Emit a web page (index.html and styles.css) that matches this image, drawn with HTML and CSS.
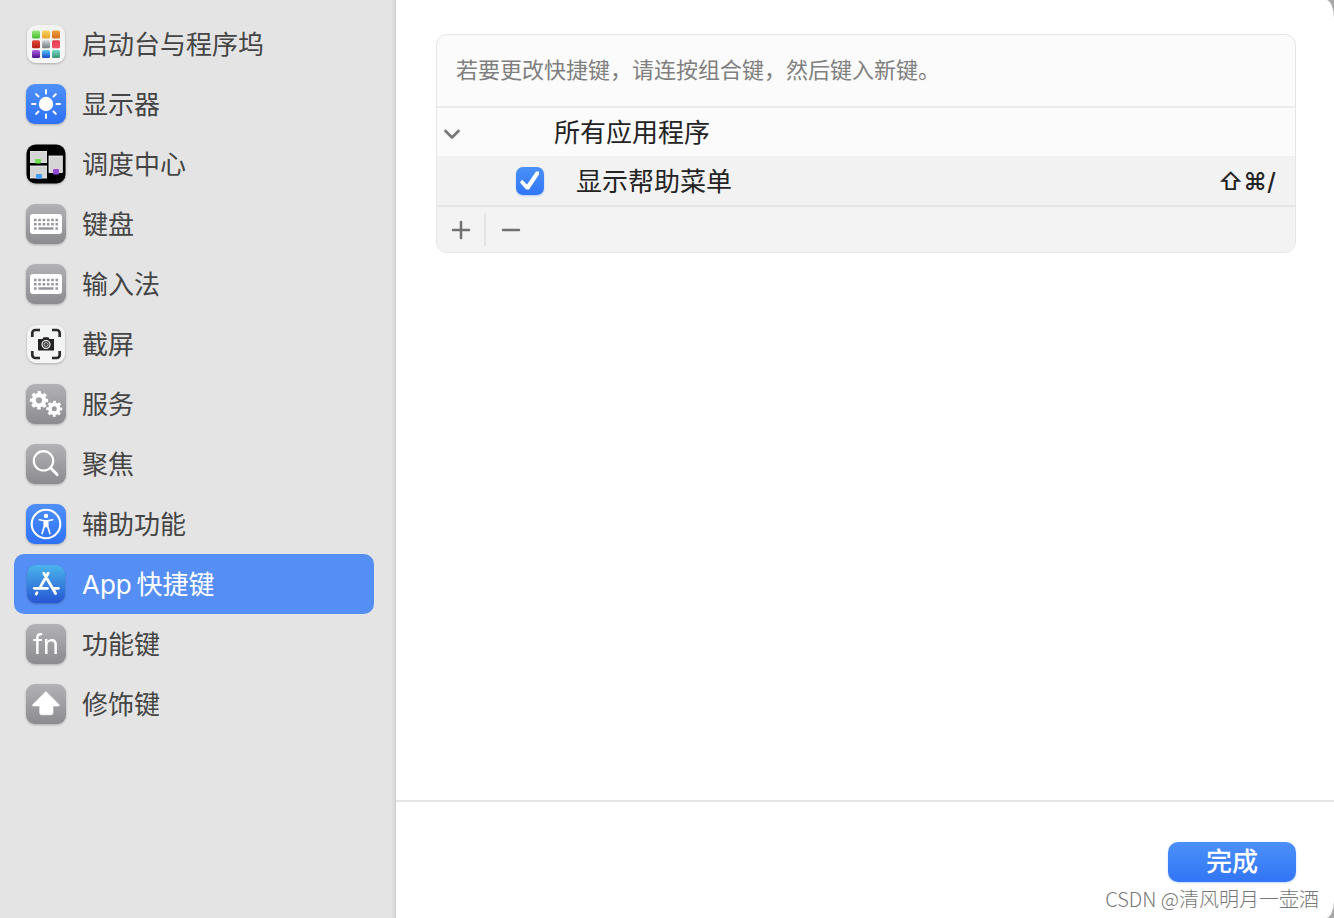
FILE: index.html
```html
<!DOCTYPE html>
<html lang="zh-CN">
<head>
<meta charset="utf-8">
<meta name="viewport" content="width=device-width, initial-scale=1">
<title>键盘快捷键</title>
<link rel="stylesheet" href="styles.css">
</head>
<body>
<svg class="defs" width="0" height="0" aria-hidden="true">
  <defs>
    <linearGradient id="gray" x2="0" y2="1"><stop offset="0" stop-color="#b2b1b6"/><stop offset="1" stop-color="#8c8b90"/></linearGradient>
    <linearGradient id="blue" x2="0" y2="1"><stop offset="0" stop-color="#4e90f8"/><stop offset="1" stop-color="#2e71f5"/></linearGradient>
    <linearGradient id="white" x2="0" y2="1"><stop offset="0" stop-color="#f1f2f2"/><stop offset="1" stop-color="#f6f6f6"/></linearGradient>
    <linearGradient id="store" x2="0" y2="1"><stop offset="0" stop-color="#4ab4ec"/><stop offset="1" stop-color="#2655d3"/></linearGradient>
    <linearGradient id="g1" x2="0" y2="1"><stop offset="0" stop-color="#9be87c"/><stop offset="1" stop-color="#43bd2e"/></linearGradient>
    <linearGradient id="g2" x2="0" y2="1"><stop offset="0" stop-color="#f7d65e"/><stop offset="1" stop-color="#eba22c"/></linearGradient>
    <linearGradient id="g3" x2="0" y2="1"><stop offset="0" stop-color="#efa03c"/><stop offset="1" stop-color="#d96d1d"/></linearGradient>
    <linearGradient id="g4" x2="0" y2="1"><stop offset="0" stop-color="#e34a3c"/><stop offset="1" stop-color="#b51d16"/></linearGradient>
    <linearGradient id="g5" x2="0" y2="1"><stop offset="0" stop-color="#cfd4d6"/><stop offset="1" stop-color="#767c80"/></linearGradient>
    <linearGradient id="g6" x2="0" y2="1"><stop offset="0" stop-color="#e83a50"/><stop offset="1" stop-color="#f05468"/></linearGradient>
    <linearGradient id="g7" x2="0" y2="1"><stop offset="0" stop-color="#b45fe0"/><stop offset="1" stop-color="#4a1190"/></linearGradient>
    <linearGradient id="g8" x2="0" y2="1"><stop offset="0" stop-color="#5cc8f8"/><stop offset="1" stop-color="#1448c8"/></linearGradient>
    <linearGradient id="g9" x2="0" y2="1"><stop offset="0" stop-color="#74dcc8"/><stop offset="1" stop-color="#3c9070"/></linearGradient>
    <g id="keyboard">
      <rect width="40" height="40" rx="9" fill="url(#gray)"/>
      <rect x="4" y="10" width="32" height="20" rx="3" fill="#fff"/>
      <g stroke="#98979c" stroke-width="2.400">
        <path d="M8 16h24M8 20.200h24" stroke-dasharray="2.600 1.700"/>
        <path d="M8 24.500h2.600M12.500 24.500h15M29.400 24.500h2.600"/>
      </g>
    </g>
  </defs>
</svg>
<div class="window">
  <nav class="sidebar" aria-label="快捷键类别">
    <ul class="categories">
      <li><a class="category" href="#launchpad">
        <svg class="icon" viewBox="0 0 40 40" aria-hidden="true"><rect x="1" y="1" width="38" height="38" rx="9" fill="url(#white)"/>
          <rect x="6" y="6.500" width="8" height="8" rx="1.500" fill="url(#g1)"/><rect x="16" y="6.500" width="8" height="8" rx="1.500" fill="url(#g2)"/><rect x="26" y="6.500" width="8" height="8" rx="1.500" fill="url(#g3)"/>
          <rect x="6" y="16.200" width="8" height="8" rx="1.500" fill="url(#g4)"/><rect x="16" y="16.200" width="8" height="8" rx="1.500" fill="url(#g5)"/><rect x="26" y="16.200" width="8" height="8" rx="1.500" fill="url(#g6)"/>
          <rect x="6" y="26" width="8" height="8" rx="1.500" fill="url(#g7)"/><rect x="16" y="26" width="8" height="8" rx="1.500" fill="url(#g8)"/><rect x="26" y="26" width="8" height="8" rx="1.500" fill="url(#g9)"/></svg>
        启动台与程序坞</a></li>
      <li><a class="category" href="#display">
        <svg class="icon" viewBox="0 0 40 40" aria-hidden="true"><rect width="40" height="40" rx="9" fill="url(#blue)"/><circle cx="20" cy="20" r="7.200" fill="#fff"/>
          <path d="M20 6v3.500M20 30.500V34M6 20h3.500M30.500 20H34M10.100 10.100l2.400 2.400M27.500 27.500l2.400 2.400M29.900 10.100l-2.400 2.400M12.500 27.500l-2.400 2.400" stroke="#fff" stroke-width="2" stroke-linecap="round"/></svg>
        显示器</a></li>
      <li><a class="category" href="#mission-control">
        <svg class="icon" viewBox="0 0 40 40" aria-hidden="true"><rect x=".5" y=".5" width="39" height="39" rx="9" fill="#000"/>
          <g fill="#d5d5d5" stroke="#f4f4f4" stroke-width=".8"><rect x="4.400" y="7.400" width="16.200" height="11.200"/><rect x="4.400" y="22" width="16.200" height="12"/><rect x="23" y="12" width="13.300" height="16.500"/></g>
          <rect x="9" y="15" width="6" height="4.500" rx="1" fill="#6fe052"/><rect x="10" y="30" width="6" height="5" rx="1" fill="#459df6"/><rect x="27" y="25" width="6" height="5.500" rx="1" fill="#9449d5"/></svg>
        调度中心</a></li>
      <li><a class="category" href="#keyboard-keys">
        <svg class="icon" viewBox="0 0 40 40" aria-hidden="true"><use href="#keyboard"/></svg>
        键盘</a></li>
      <li><a class="category" href="#input">
        <svg class="icon" viewBox="0 0 40 40" aria-hidden="true"><use href="#keyboard"/></svg>
        输入法</a></li>
      <li><a class="category" href="#screenshot">
        <svg class="icon" viewBox="0 0 40 40" aria-hidden="true"><rect x="1" y="1" width="38" height="38" rx="9" fill="url(#white)"/>
          <path d="M6.300 13V9a3 3 0 0 1 3-3H14M26 6h4.700a3 3 0 0 1 3 3v4M33.700 27v4a3 3 0 0 1-3 3H26M14 34H9.300a3 3 0 0 1-3-3v-4" fill="none" stroke="#2b2b2b" stroke-width="2.700"/>
          <path d="M12 15h4.500l1-1.800h5l1 1.800H28v11.500H12z" fill="#242424"/><circle cx="20" cy="20.500" r="4" fill="#444" stroke="#fff" stroke-width="1.100"/><circle cx="20" cy="20.500" r="2" fill="none" stroke="#ddd" stroke-width=".7"/></svg>
        截屏</a></li>
      <li><a class="category" href="#services">
        <svg class="icon" viewBox="0 0 40 40" aria-hidden="true"><rect width="40" height="40" rx="9" fill="url(#gray)"/>
          <g fill="none" stroke="#fff"><circle cx="13" cy="16.300" r="5.200" stroke-width="4.200"/><circle cx="13" cy="16.300" r="8" stroke-width="2.400" stroke-dasharray="3.500 2.783" stroke-dashoffset="1.750"/>
          <circle cx="28.300" cy="24.800" r="4.400" stroke-width="3.800"/><circle cx="28.300" cy="24.800" r="6.900" stroke-width="2.200" stroke-dasharray="2.900 2.519" stroke-dashoffset="1.450"/></g></svg>
        服务</a></li>
      <li><a class="category" href="#spotlight">
        <svg class="icon" viewBox="0 0 40 40" aria-hidden="true"><rect width="40" height="40" rx="9" fill="url(#gray)"/><circle cx="17.500" cy="16.800" r="9.700" fill="none" stroke="#fff" stroke-width="2.100"/><path d="M24.600 24l6.500 6.600" stroke="#fff" stroke-width="2.900" stroke-linecap="round"/></svg>
        聚焦</a></li>
      <li><a class="category" href="#accessibility">
        <svg class="icon" viewBox="0 0 40 40" aria-hidden="true"><rect width="40" height="40" rx="9" fill="url(#blue)"/><circle cx="20" cy="20" r="14.300" fill="none" stroke="#fff" stroke-width="2.100"/><circle cx="20" cy="11.900" r="2.200" fill="#fff"/>
          <path d="M13.300 15.700l5 1.100h3.400l5-1.100M18.300 16.800v5.500l-2.200 7.300M21.700 16.800v5.500l2.200 7.300" fill="none" stroke="#fff" stroke-width="1.600" stroke-linecap="round" stroke-linejoin="round"/><path d="M17.900 16.500h4.200V23l-.8 1-1.300-1.200-1.300 1.200-.8-1z" fill="#fff"/></svg>
        辅助功能</a></li>
      <li><a class="category category-selected" href="#apps" aria-current="page">
        <svg class="icon" viewBox="0 0 40 40" aria-hidden="true"><rect x="1" y="1" width="38" height="38" rx="9" fill="url(#store)"/>
          <g stroke="#fff" stroke-width="2.800" stroke-linecap="round"><path d="M22.200 9.200L14.600 22.500M17.800 9.200l11.800 20.300M8.200 24.300h13.300M28.200 24.300h4.200M10.900 28.800l-.7 1.200"/></g></svg>
        App&thinsp;快捷键</a></li>
      <li><a class="category" href="#function-keys">
        <svg class="icon" viewBox="0 0 40 40" aria-hidden="true"><rect width="40" height="40" rx="9" fill="url(#gray)"/><text class="fn" x="20" y="30" text-anchor="middle">fn</text></svg>
        功能键</a></li>
      <li><a class="category" href="#modifiers">
        <svg class="icon" viewBox="0 0 40 40" aria-hidden="true"><rect width="40" height="40" rx="9" fill="url(#gray)"/><path d="M20 7.500L33 20.500q1 1.500-.8 1.500H27v7q0 1.800-1.800 1.800H15.500Q13.700 30.800 13.700 29v-7H7.600q-1.800 0-.8-1.500z" fill="#fff" stroke="#fff" stroke-width=".6" stroke-linejoin="round"/></svg>
        修饰键</a></li>
    </ul>
  </nav>
  <div class="pane">
    <main class="content">
      <section class="shortcuts">
        <p class="hint">若要更改快捷键，请连按组合键，然后键入新键。</p>
        <table class="list">
          <tbody>
            <tr class="group">
              <td class="toggle-cell"><button class="toggle" type="button" aria-label="折叠" aria-expanded="true">
                <svg class="chevron" viewBox="0 0 18 12" aria-hidden="true"><path d="M2.500 3l6.500 6.500L15.500 3"/></svg></button></td>
              <td class="group-name">所有应用程序</td>
              <td></td>
            </tr>
            <tr class="entry">
              <td></td>
              <td><div class="entry-name"><input class="check" type="checkbox" id="help-menu" checked><label class="entry-label" for="help-menu">显示帮助菜单</label></div></td>
              <td class="keys">⇧⌘/</td>
            </tr>
          </tbody>
        </table>
        <div class="tools">
          <button class="tool" type="button" aria-label="添加"><svg class="tool-icon" viewBox="0 0 20 20" aria-hidden="true"><path d="M2 10h16M10 2v16"/></svg></button>
          <button class="tool" type="button" aria-label="移除"><svg class="tool-icon" viewBox="0 0 20 20" aria-hidden="true"><path d="M2 10h16"/></svg></button>
        </div>
      </section>
    </main>
    <footer class="footer"><button class="done" type="button">完成</button></footer>
  </div>
  <p class="watermark">CSDN @清风明月一壶酒</p>
</div>
</body>
</html>
```
FILE: styles.css
```css
* { box-sizing: border-box; }

body {
  margin: 0;
  background: #a8a8a8;
  color: #232323;
  font-family: Inter, "Noto Sans CJK SC", sans-serif;
  font-size: 26px;
  line-height: 40px;
}

button, input { margin: 0; font: inherit; }
button { padding: 0; border: 0; background: none; }
p { margin: 0; }
.defs { position: absolute; }

.window {
  position: relative;
  display: flex;
  min-height: 100vh;
}

.sidebar {
  flex: 0 0 396px;
  padding: 14px 22px 14px 14px;
  background: linear-gradient(to left, #cbcbcb, #dddddd 2px, #e4e4e4 5px);
}

.categories { margin: 0; padding: 0; list-style: none; }

.category {
  display: flex;
  align-items: center;
  gap: 16px;
  height: 60px;
  padding: 2px 12px 0;
  border-radius: 10px;
  color: #454545;
  text-decoration: none;
}

.category-selected { background: #558ff5; color: #fff; }

.icon {
  flex: none;
  width: 40px;
  height: 40px;
  margin-bottom: 2px;
  overflow: visible;
  filter: drop-shadow(0 1px 1px rgb(0 0 0 / 25%));
}

.fn { fill: #fff; font-size: 27px; font-weight: 400; }

.pane {
  display: flex;
  flex: 1;
  flex-direction: column;
  min-width: 0;
  border-radius: 0 8px 8px 0 / 0 18px 18px 0;
  background: #fff;
}

.content { flex: 1; padding: 34px 38px 34px 40px; }

.shortcuts {
  overflow: hidden;
  border: 1px solid #e6e6e6;
  border-radius: 11px;
  background: #fbfbfb;
}

.hint {
  padding: 15px 19px 16px;
  border-bottom: 2px solid #ececec;
  color: #7f7f7f;
  font-size: 22px;
}

.list { width: 100%; border-collapse: collapse; }
.list td { height: 48px; padding: 0; }
.toggle-cell { width: 78px; }
.toggle { display: block; width: 30px; height: 40px; }
.chevron {
  display: block;
  width: 18px;
  height: 12px;
  margin: 4px auto 0;
  fill: none;
  stroke: #777;
  stroke-width: 2.800;
  stroke-linecap: round;
  stroke-linejoin: round;
}
.list .group-name { padding: 2px 0 0 39px; }
.list .entry td { height: 49px; }
.entry { background: #f2f2f2; }
.entry-name { display: flex; align-items: center; gap: 32px; padding-left: 1px; }
.entry-label { padding-top: 2px; }

.check {
  appearance: none;
  width: 28px;
  height: 28px;
  border-radius: 7px;
  background: linear-gradient(#4b91f8, #3076f6);
  box-shadow: 0 1px 2px rgb(48 118 246 / 30%);
}
.check:checked::after {
  content: "";
  display: block;
  width: 28px;
  height: 28px;
  background: #fff;
  clip-path: polygon(4px 16px, 6px 13px, 11px 18px, 20px 5px, 23px 5px, 23px 8px, 13px 23px, 10px 23px);
}

.list .keys {
  padding: 2px 19px 0 0;
  font-size: 24px;
  font-weight: 500;
  text-align: right;
  white-space: nowrap;
}

.tools {
  display: flex;
  align-items: center;
  height: 47px;
  border-top: 2px solid #e5e5e5;
  background: #f3f3f3;
}
.tool { display: grid; place-items: center; width: 49px; height: 33px; }
.tool:first-child { border-right: 2px solid #e3e3e3; }
.tool-icon {
  width: 20px;
  height: 20px;
  fill: none;
  stroke: #707070;
  stroke-width: 2.500;
  stroke-linecap: round;
}

.footer {
  display: flex;
  justify-content: flex-end;
  padding: 40px 38px 36px;
  border-top: 2px solid #e5e5e5;
}

.done {
  width: 128px;
  height: 40px;
  border-radius: 10px;
  background: linear-gradient(#4b90f8, #3275f6);
  box-shadow: 0 1px 2px rgb(48 118 246 / 30%);
  color: #fff;
  font-weight: 500;
  line-height: 38px;
}

.watermark {
  position: absolute;
  right: 15px;
  bottom: 4px;
  color: #777;
  font-family: "Noto Sans CJK SC", sans-serif;
  font-size: 20px;
  font-weight: 300;
  line-height: 30px;
  text-shadow: -1px -1px 0 #fff;
}
```
